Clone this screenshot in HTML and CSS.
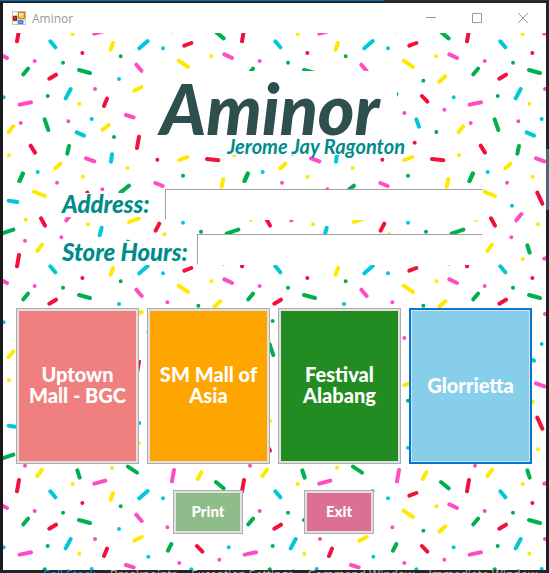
FILE: index.html
```html
<!DOCTYPE html>
<html lang="en">
<head>
<meta charset="utf-8">
<meta name="viewport" content="width=device-width, initial-scale=1">
<title>Aminor</title>
<link rel="stylesheet" href="styles.css">
</head>
<body>
<div class="desktop">
  <div class="rail-top"></div>
  <div class="rail-left"></div>
  <div class="window">
    <header class="titlebar">
      <svg class="app-icon" width="14" height="14" viewBox="0 0 42 42" aria-hidden="true">
        <path d="M1 1h40v40H1z" fill="#fff" stroke="#b9b9b9" stroke-width="3"/>
        <path d="M1 14h16M15 1v40M1 30h16M15 27h26" stroke="#c4c4c4" stroke-width="2"/>
        <path d="M19 4h19v19H19z" fill="#f7c948" stroke="#b07d10" stroke-width="3"/>
        <path d="M21 6h10v8H21z" fill="#ffe68e"/>
        <path d="M4 16h10v12H4z" fill="#c9352c" stroke="#821512" stroke-width="3"/>
        <path d="M19 29h14v9H19z" fill="#6f9ff0" stroke="#3e6dc9" stroke-width="3"/>
      </svg>
      <span class="caption">Aminor</span>
      <div class="window-controls">
        <button type="button" aria-label="Minimize"><svg width="12" height="12" viewBox="0 0 12 12"><path d="M1 5.500h10"/></svg></button>
        <button type="button" aria-label="Maximize"><svg width="12" height="12" viewBox="0 0 12 12"><path d="M1.500 1.500h9v9h-9z"/></svg></button>
        <button type="button" aria-label="Close"><svg width="12" height="12" viewBox="0 0 12 12"><path d="M1 1l10 10M11 1L1 11"/></svg></button>
      </div>
    </header>
    <main class="client">
      <svg class="sprinkles" aria-hidden="true">
        <defs>
          <pattern id="sprinkle-tile" width="225" height="225" patternUnits="userSpaceOnUse">
            <g transform="scale(.33333) translate(-9 -99)" fill="none" stroke-width="12" stroke-linecap="round">
              <g id="bits">
                <path stroke="#f0123c" d="M57 90l-6 34M553 137l21-8M148 236l20-12M321 296l-9 22M591 288l16 17M417 410l-6 34M92 437l13 21M621 477l34 4M262 578l15 33M123 655l12 22M478 671l-11 21M247 159h.1M569 428h.1M472 479h.1"/>
                <path stroke="#00c8d8" d="M151 124l15 18M418 145l25-22M212 267l-15 28M574 358l8 22M230 397l22 10M336 463l-3 22M26 602l26 4M305 683l-6 23M489 145h.1M357 237h.1M11 292h.1M445 320h.1M275 357h.1M113 516h.1M186 617h.1M549 668h.1M418 594h.1"/>
                <path stroke="#ffe900" d="M339 129l-7 20M536 182l28 19M643 245l18-16M403 272l22-11M26 396l14-17M308 389l18-14M538 480l24-9M166 505l15-14M670 537l-5 23M102 575l33 13M387 666l29-11M112 753l14-19M604 742l-11 20M218 102h.1M634 169h.1M238 311h.1M27 466h.1M383 504h.1M248 530h.1M77 659h.1M264 673h.1M336 728h.1M493 703h.1"/>
                <path stroke="#ff4cc5" d="M283 101l33-9M673 163l23 11M409 194l16 19M59 314l34-7M378 345l23 7M258 475l25 9M466 549l22 9M199 661l15-19M522 735l-6 34M104 183h.1M502 232h.1M285 267h.1M658 329h.1M538 339h.1M62 369h.1M205 364h.1M171 548h.1M307 568h.1M184 712h.1M75 722h.1"/>
                <path stroke="#00b04c" d="M648 96l23 19M70 223l14-17M237 210l33 9M514 282l-10 20M134 358l11 32M207 438l-5 23M68 521l-10 22M361 578l26-21M744 521l-10 22M5 701l35-12M232 736l7 22M384 725l27 18M362 169h.1M189 188h.1M595 242h.1M143 288h.1M634 396h.1M342 411h.1M549 527h.1M603 695h.1"/>
              </g>
              <use href="#bits" x="675"/>
              <use href="#bits" x="-675"/>
              <use href="#bits" y="675"/>
              <use href="#bits" y="-675"/>
            </g>
          </pattern>
        </defs>
        <rect width="100%" height="100%" fill="url(#sprinkle-tile)"/>
      </svg>
      <div class="brand">
        <h1>Aminor</h1>
        <p>Jerome Jay Ragonton</p>
      </div>
      <form class="details">
        <div class="field address">
          <label for="address">Address:</label>
          <input id="address" type="text">
        </div>
        <div class="field hours">
          <label for="hours">Store Hours:</label>
          <input id="hours" type="text">
        </div>
      </form>
      <div class="branches">
        <button type="button" class="tile coral">Uptown Mall - BGC</button>
        <button type="button" class="tile orange">SM Mall of Asia</button>
        <button type="button" class="tile green">Festival Alabang</button>
        <button type="button" class="tile sky current">Glorrietta</button>
      </div>
      <div class="actions">
        <button type="button" class="tile sage">Print</button>
        <button type="button" class="tile rose">Exit</button>
      </div>
    </main>
  </div>
  <div class="rail-right"></div>
  <nav class="dock" aria-label="Tool windows">
    <span class="active">Call Stack</span><span>Breakpoints</span><span>Exception Settings</span><span>Command Window</span><span>Immediate Window</span><span>Output</span>
  </nav>
</div>
</body>
</html>
```
FILE: styles.css
```css
* {
  box-sizing: border-box;
}

body {
  margin: 0;
  background: #252526;
  font-family: Lato, "Open Sans", sans-serif;
}

.desktop {
  display: grid;
  grid-template-columns: 3px minmax(0, 1fr) 3px;
  grid-template-rows: 3px 1fr 3px;
  min-height: 100vh;
}

.rail-top {
  grid-column: 1 / -1;
  background: linear-gradient(90deg, #0072c6 0 70%, #2d2d30 70%) no-repeat 0 0 / 100% 1px, #252526;
}

.rail-left {
  background: #1b1b1c;
}

.rail-right {
  background: linear-gradient(#252526 0 146px, #48687a 146px 207px, #202021 207px);
}

.window {
  display: flex;
  flex-direction: column;
  background: #fff;
}

.titlebar {
  display: flex;
  align-items: center;
  height: 30px;
  padding-left: 9px;
}

.caption {
  margin-left: 6px;
  color: #999;
  font: 12px "Open Sans", sans-serif;
}

.window-controls {
  display: flex;
  margin-left: auto;
}

.window-controls button {
  display: grid;
  place-items: center;
  width: 46px;
  height: 28px;
  padding: 0;
  border: 0;
  background: none;
}

.window-controls svg {
  fill: none;
  stroke: #999;
}

.client {
  position: relative;
  display: flex;
  flex: 1;
  flex-direction: column;
  padding: 38px 14px 36px 13px;
}

.sprinkles {
  position: absolute;
  inset: 0;
  width: 100%;
  height: 100%;
}

.brand,
.details,
.branches,
.actions {
  position: relative;
}

.brand {
  align-self: center;
  width: 262px;
}

.brand h1 {
  width: 254px;
  height: 66px;
  margin: 0;
  background: #fff;
  color: #2f4f4f;
  font-size: 70px;
  font-style: italic;
  font-weight: 900;
  line-height: 74px;
  text-align: center;
}

.brand p {
  position: relative;
  height: 18px;
  margin: 0;
  background: #fff;
  color: #008b8b;
  font-size: 20px;
  font-style: italic;
  font-weight: 700;
  line-height: 18px;
  text-align: right;
}

.details {
  display: flex;
  flex-direction: column;
  gap: 14px;
  margin-top: 34px;
  padding: 0 49px 0 44px;
}

.field {
  display: flex;
  align-items: center;
}

.address {
  gap: 15px;
}

.hours {
  align-items: flex-end;
}

.field label {
  flex: none;
  width: 90px;
  height: 24px;
  padding-left: 2px;
  background: #fff;
  color: #008b8b;
  font-size: 24px;
  font-style: italic;
  font-weight: 900;
  line-height: 22px;
  white-space: nowrap;
}

.hours label {
  width: 137px;
}

.field input {
  flex: 1;
  min-width: 0;
  height: 31px;
  padding: 0 4px;
  border: 1px solid #fff;
  border-top-color: #a0a0a0;
  border-left-color: #a0a0a0;
  border-radius: 0;
  outline: 0;
  background: #fff;
  font-size: 20px;
}

.branches {
  display: grid;
  grid-template-columns: repeat(4, minmax(0, 1fr));
  gap: 8px;
  margin-top: 43px;
}

.tile {
  padding: 0;
  border: 1px solid #adadad;
  border-radius: 0;
  box-shadow: inset 0 0 0 2px #e1e1e1;
  color: #fff;
  font-family: inherit;
  font-weight: 900;
}

.branches .tile {
  height: 156px;
  padding: 0 8px 2px;
  font-size: 20px;
  line-height: 21px;
}

.branches .current {
  border: 2px solid #0078d7;
  box-shadow: inset 0 0 0 1px #e1e1e1;
}

.actions {
  display: flex;
  justify-content: center;
  gap: 61px;
  margin-top: 26px;
  padding-right: 1px;
}

.actions .tile {
  width: 70px;
  height: 44px;
  padding-bottom: 2px;
  font-size: 15px;
}

.coral { background: #f08080; }
.orange { background: #ffa500; }
.green { background: #228b22; }
.sky { background: #87ceeb; }
.sage { background: #8fbc8b; }
.rose { background: #db7093; }

.dock {
  display: flex;
  grid-column: 1 / -1;
  gap: 14px;
  height: 3px;
  padding-left: 43px;
  overflow: hidden;
  background: #252526;
  color: #b8b8b8;
  font: 12px/9px "Open Sans", sans-serif;
  white-space: nowrap;
}

.dock .active {
  color: #0097fb;
}
```
